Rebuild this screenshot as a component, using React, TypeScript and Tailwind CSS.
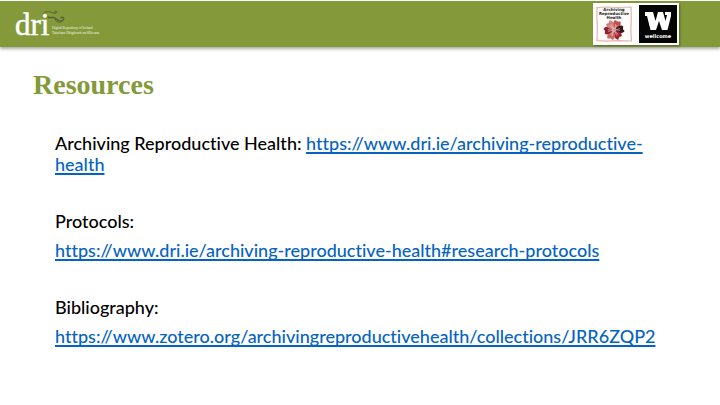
import type { ReactNode } from "react";

function DriLogo() {
  return (
    <svg
      role="img"
      aria-label="Digital Repository of Ireland"
      viewBox="0 0 96 34"
      className="h-[34px] w-24 shrink-0 font-['Liberation_Serif',serif]"
    >
      <text x="0" y="28" fontSize="31" fill="#fff" stroke="#fff" strokeWidth=".5">
        dri
      </text>
      <g fill="none" stroke="#566338" strokeLinecap="round" strokeWidth="1">
        <path d="M28 7c2-3 6-3 10-1 3 1 5-1 3-2-2 0-2 2-1 2" />
        <path d="M33 10c2 2 5-1 7 1 3 3 6 4 8 2s-1-4-2-2" strokeWidth="1.3" />
        <path d="M40 12c2 5 7 4 8 1" />
      </g>
      <g fontSize="3.500" fill="#f4f7e8">
        <text x="37" y="22">Digital Repository of Ireland</text>
        <text x="37" y="27">Taisclann Dhigiteach na hÉireann</text>
      </g>
    </svg>
  );
}

function ReproductiveHealthLogo() {
  const petals = [
    { angle: 0, fill: "#c2504f" },
    { angle: 60, fill: "#35191d" },
    { angle: 120, fill: "#a32634" },
    { angle: 180, fill: "#c86a64" },
    { angle: 240, fill: "#8f2430" },
    { angle: 300, fill: "#d0807a" },
  ];
  return (
    <svg
      role="img"
      aria-label="Archiving Reproductive Health"
      viewBox="0 0 38 38"
      className="size-[38px] font-['DejaVu_Sans',sans-serif]"
    >
      <path
        d="M2 2.500L12 2l10 .5L36 2l.3 12-.4 11 .5 11L24 35.600l-12 .5L2 35.700l.4-12L1.800 12z"
        fill="#fffdfc"
        stroke="#e3b4ac"
        strokeWidth="1.200"
      />
      <g fontSize="4" fontWeight="700" fill="#25191b" textAnchor="middle">
        <text x="19" y="6">Archiving</text>
        <text x="19" y="10">Reproductive</text>
        <text x="19" y="14">Health</text>
      </g>
      <g transform="translate(19 25)">
        {petals.map(({ angle, fill }) => (
          <g key={angle} transform={`rotate(${angle + 25})`}>
            <path d="M0-1C-3-3-5-7-3-9.500L0-9l2-1.500C5-8 4-4 0-1z" fill={fill} />
            <path d="M0-2l-1-4M0-2l1-4" stroke="#f2c6bd" strokeWidth=".6" />
          </g>
        ))}
        <circle r="1.800" fill="#f3d2c5" />
        <circle r=".7" fill="#8b1f2d" />
      </g>
    </svg>
  );
}

function WellcomeLogo() {
  return (
    <svg
      role="img"
      aria-label="Wellcome"
      viewBox="0 0 38 38"
      className="size-[38px] font-['DejaVu_Sans',sans-serif]"
    >
      <rect width="38" height="38" fill="#050505" />
      <path
        d="M6 7h8l2.500 9L19 7h5l2.500 9L28 10h-2V7h6v4l-3.500 14H23l-3-9-3 9h-5.500L8 11H6z"
        fill="#fff"
      />
      <text x="19" y="33" fontSize="5" fontWeight="700" fill="#fff" textAnchor="middle">
        wellcome
      </text>
    </svg>
  );
}

function Link({ href, children }: { href: string; children: ReactNode }) {
  return (
    <a
      href={href}
      className="text-[#0563c1] underline decoration-2 underline-offset-2 [text-decoration-skip-ink:none]"
    >
      {children}
    </a>
  );
}

export default function App() {
  return (
    <div className="min-h-screen bg-white pt-px font-['Lato','Liberation_Sans',sans-serif] text-black">
      <header className="flex h-[46px] items-center justify-between bg-[#83993a] pr-[41px] pl-[15px] shadow-[0_2px_3px_#aaa]">
        <DriLogo />
        <div className="flex gap-1.5 bg-white p-0.5 shadow-[1px_1px_2px_#56662b]">
          <ReproductiveHealthLogo />
          <WellcomeLogo />
        </div>
      </header>
      <main className="px-[33px] pt-[22px]">
        <h1 className="font-['Liberation_Serif',serif] text-[28px] leading-8 font-bold text-[#83993a]">
          Resources
        </h1>
        <div className="mt-8 space-y-9 pr-[18px] pl-[22px] text-lg leading-[21px] font-medium [font-variant-ligatures:none]">
          <p>
            Archiving Reproductive Health:{" "}
            <Link href="https://www.dri.ie/archiving-reproductive-health">
              https://www.dri.ie/archiving-reproductive-health
            </Link>
          </p>
          <section className="space-y-2">
            <p>Protocols:</p>
            <p>
              <Link href="https://www.dri.ie/archiving-reproductive-health#research-protocols">
                https://www.dri.ie/archiving-reproductive-health#research-protocols
              </Link>
            </p>
          </section>
          <section className="space-y-2">
            <p>Bibliography:</p>
            <p>
              <Link href="https://www.zotero.org/archivingreproductivehealth/collections/JRR6ZQP2">
                https://www.zotero.org/archivingreproductivehealth/collections/JRR6ZQP2
              </Link>
            </p>
          </section>
        </div>
      </main>
    </div>
  );
}
